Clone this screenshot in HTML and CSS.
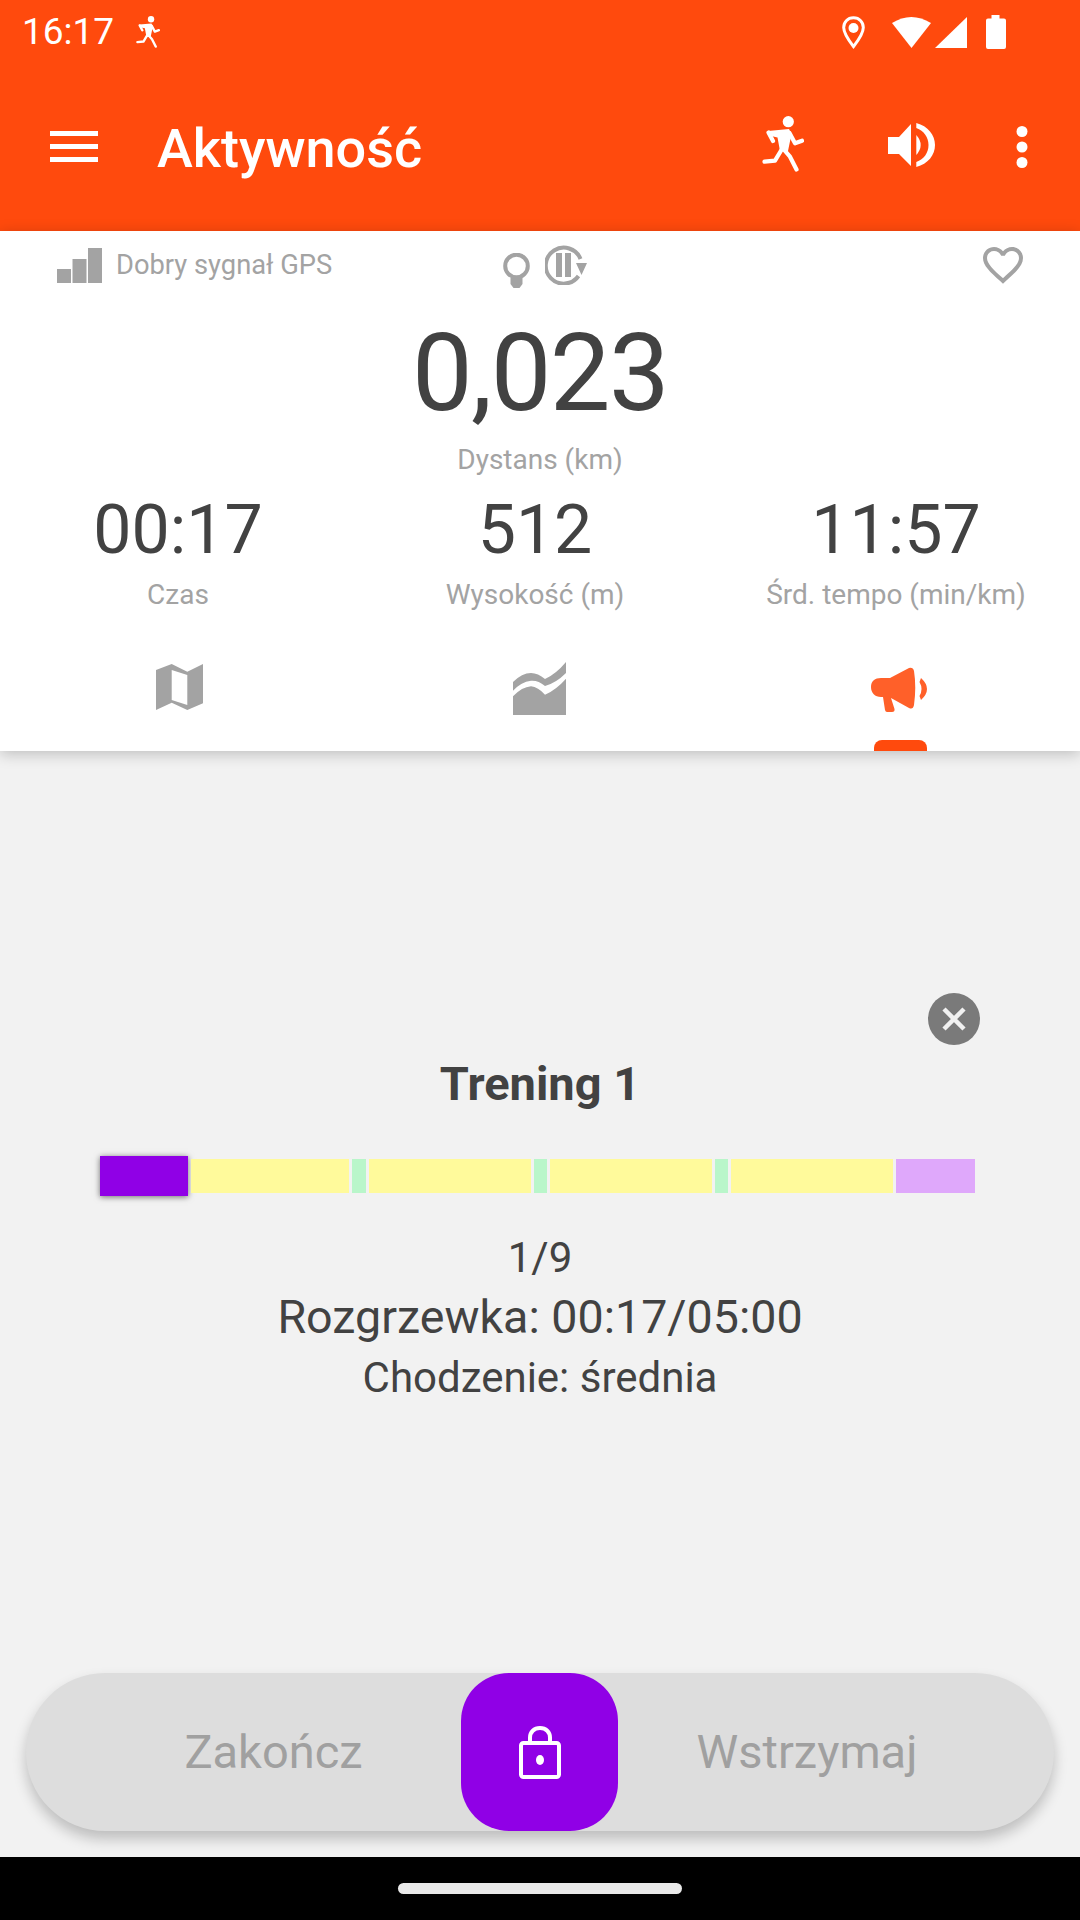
FILE: index.html
```html
<!DOCTYPE html>
<html lang="pl">
<head>
<meta charset="utf-8">
<title>Aktywność</title>
<link rel="stylesheet" href="styles.css">
</head>
<body>
<svg class="defs" width="0" height="0" aria-hidden="true">
  <symbol id="runner" viewBox="0 0 42 56">
    <circle cx="26.3" cy="5.7" r="5.6" fill="currentColor"/>
    <path d="M6 15L27 13L29.500 18L26 35L18 35L15.500 21.500L9 20Z" fill="currentColor"/>
    <path d="M6.500 16.500L11 25M27.500 17L33 27.300L40 24.700M20 33L13 44.700L2.500 45.700M20.500 32L28 40.700L34.500 53.500" fill="none" stroke="currentColor" stroke-width="4.200" stroke-linecap="round" stroke-linejoin="round"/>
  </symbol>
</svg>
<div class="phone">
  <header class="top">
    <div class="status">
      <span class="clock">16:17</span>
      <svg class="st-run"><use href="#runner"/></svg>
      <span class="spacer"></span>
      <svg class="st-pin" viewBox="0 0 23 33"><path d="M11.500 1.800C5.500 1.800 1.700 6.300 1.700 11.500C1.700 18 8 26 11.500 30.500C15 26 21.300 18 21.300 11.500C21.300 6.300 17.500 1.800 11.500 1.800Z" fill="none" stroke="#fff" stroke-width="3"/><circle cx="11.500" cy="12" r="5" fill="#fff"/></svg>
      <svg class="st-wifi" viewBox="0 0 39 32"><path d="M0 7Q19.300 -5 39 7L19.500 32Z" fill="#fff"/></svg>
      <svg class="st-signal" viewBox="0 0 32 32"><path d="M0 32L32 1V32Z" fill="#fff"/></svg>
      <svg class="st-batt" viewBox="0 0 20 34"><path d="M5.500 0H13.500V3.500H18A2 2 0 0 1 20 5.500V32A2 2 0 0 1 18 34H2A2 2 0 0 1 0 32V5.500A2 2 0 0 1 2 3.500H5.500Z" fill="#fff"/></svg>
    </div>
    <div class="appbar">
      <svg class="menu" viewBox="0 0 48 31"><path d="M0 0H48V5H0ZM0 13H48V18H0ZM0 26H48V31H0Z" fill="#fff"/></svg>
      <h1 class="title">Aktywność</h1>
      <span class="spacer"></span>
      <svg class="bar-run"><use href="#runner"/></svg>
      <svg class="speaker" viewBox="0 0 47 46"><path d="M0 15H11L23 2V44L11 32H0Z" fill="#fff"/><path d="M28.300 13Q37 23 28.300 33Z" fill="#fff"/><path d="M28.300 1C40 4 47 13 47 23C47 33 40 42 28.300 45V40C36 37 40.500 31 40.500 23C40.500 15 36 9 28.300 6Z" fill="#fff"/></svg>
      <svg class="more" viewBox="0 0 12 42"><circle cx="6" cy="5.500" r="5.500" fill="#fff"/><circle cx="6" cy="21" r="5.500" fill="#fff"/><circle cx="6" cy="36.500" r="5.500" fill="#fff"/></svg>
    </div>
  </header>

  <section class="panel">
    <div class="gps">
      <svg class="gps-bars" viewBox="0 0 45 35"><path d="M0 21H14V35H0ZM15.500 11H29.500V35H15.500ZM31 0H45V35H31Z" fill="#a3a3a3"/></svg>
      <span class="gps-text">Dobry sygnał GPS</span>
      <svg class="bulb" viewBox="0 0 27 35"><circle cx="13.500" cy="13" r="11.300" fill="none" stroke="#a3a3a3" stroke-width="4"/><path d="M7.500 25H19.500V31L16.500 35H10.500L7.500 31Z" fill="#a3a3a3"/></svg>
      <svg class="autopause" viewBox="0 0 42 40"><path d="M33.500 31A18 18 0 1 1 35.500 14" fill="none" stroke="#a3a3a3" stroke-width="4"/><path d="M11 8H17V32H11ZM20 8H26V32H20ZM31 18H42L36.500 30Z" fill="#a3a3a3"/></svg>
      <svg class="heart" viewBox="0 0 24 24"><path d="M16.500 3c-1.740 0-3.410.81-4.500 2.090C10.910 3.810 9.240 3 7.500 3 4.420 3 2 5.420 2 8.500c0 3.780 3.400 6.860 8.550 11.540L12 21.350l1.450-1.320C18.600 15.360 22 12.280 22 8.500 22 5.420 19.580 3 16.500 3zm-4.400 15.550l-.1.100-.1-.1C7.140 14.240 4 11.390 4 8.500 4 6.500 5.500 5 7.500 5c1.540 0 3.040.99 3.570 2.360h1.870C13.460 5.990 14.960 5 16.500 5c2 0 3.500 1.500 3.500 3.500 0 2.890-3.140 5.740-7.900 10.050z" fill="#a3a3a3"/></svg>
    </div>
    <div class="big-value">0,023</div>
    <div class="label big-label">Dystans (km)</div>
    <div class="metrics">
      <div class="metric"><div class="value">00:17</div><div class="label metric-label">Czas</div></div>
      <div class="metric"><div class="value">512</div><div class="label metric-label">Wysokość (m)</div></div>
      <div class="metric"><div class="value">11:57</div><div class="label metric-label">Śrd. tempo (min/km)</div></div>
    </div>
    <nav class="tabs">
      <div class="tab">
        <svg class="t-map" viewBox="0 0 47 46"><path fill-rule="evenodd" d="M0 6L15.700 0L31.300 7.700L47 0V39.300L31.300 46L15.700 38.700L0 46ZM15.700 6V36L31.300 41V11Z" fill="#a3a3a3"/></svg>
      </div>
      <div class="tab">
        <svg class="t-chart" viewBox="0 0 53 53"><path d="M0 20Q9 11 18 11Q25 11 32 17Q43 12 53 0V11Q43 21 32 24Q25 18 18 18.700Q8 20 0 28.700Z" fill="#a3a3a3"/><path d="M0 34.300Q9 25 18 24.300Q25 25 32 32.700Q43 28 53 16.700V53H0Z" fill="#a3a3a3"/></svg>
      </div>
      <div class="tab tab-on">
        <svg class="t-mega" viewBox="0 0 58 46"><path d="M0 20C0 14 4 11 10 11H19L38 1Q42 0 43 4Q45.500 20 43 38Q42 43 38 41L20 31L23.500 42Q24 45 21 45H16Q14.500 45 14 43L12 30H10C4 30 0 26 0 20Z" fill="#ff6029"/><path d="M50 11Q62 22 50 33L48.500 29Q52.500 22 48.500 15Z" fill="#ff6029"/></svg>
        <span class="indicator"></span>
      </div>
    </nav>
  </section>

  <main class="content">
    <button class="close" type="button" aria-label="Zamknij">
      <svg viewBox="0 0 26 26"><path d="M3 3L23 23M23 3L3 23" stroke="#f1f1f1" stroke-width="4.500" fill="none"/></svg>
    </button>
    <h2 class="workout">Trening 1</h2>
    <div class="steps">
      <span class="step step-now"></span>
      <span class="step step-walk" style="width:158px"></span>
      <span class="step step-rest" style="width:14px"></span>
      <span class="step step-walk" style="width:162px"></span>
      <span class="step step-rest" style="width:13px"></span>
      <span class="step step-walk" style="width:162px"></span>
      <span class="step step-rest" style="width:13px"></span>
      <span class="step step-walk" style="width:162px"></span>
      <span class="step step-cool" style="width:79px"></span>
    </div>
    <div class="count">1/9</div>
    <div class="phase">Rozgrzewka: 00:17/05:00</div>
    <div class="intensity">Chodzenie: średnia</div>

    <div class="slider">
      <div class="side side-left">Zakończ</div>
      <div class="lock">
        <svg viewBox="0 0 42 53"><path d="M11 17V11.500C11 6 15 2 21 2C27 2 31 6 31 11.500V17" fill="none" stroke="#fff" stroke-width="4"/><rect x="2" y="17" width="38" height="34" rx="2.500" fill="none" stroke="#fff" stroke-width="4"/><ellipse cx="21" cy="34" rx="4" ry="5" fill="#fff"/></svg>
      </div>
      <div class="side side-right">Wstrzymaj</div>
    </div>
  </main>

  <footer class="navbar"><span class="handle"></span></footer>
</div>
</body>
</html>
```

FILE: styles.css
```css
* { box-sizing: border-box; }
html, body { margin: 0; padding: 0; }
body { font-family: Roboto, "Noto Sans", sans-serif; background: #f2f2f2; }
.defs { display: block; height: 0; width: 0; overflow: hidden; }
svg { display: block; flex: none; }
.spacer { flex: 1; }
.phone { width: 1080px; height: 1920px; display: flex; flex-direction: column; overflow: hidden; }

.top { height: 231px; background: #ff4a0d; color: #fff; }
.status { height: 64px; display: flex; align-items: center; padding: 0 74px 0 22px; }
.clock { font-size: 37px; line-height: 62px; width: 114px; }
.st-run { width: 24px; height: 32px; }
.st-pin { width: 23px; height: 33px; margin-right: 27px; }
.st-wifi { width: 39px; height: 32px; margin-right: 4px; }
.st-signal { width: 32px; height: 32px; margin-right: 19px; }
.st-batt { width: 20px; height: 34px; }

.appbar { height: 167px; display: flex; align-items: center; padding: 0 52px 0 50px; }
.menu { width: 48px; height: 31px; margin: -2px 59px 0 0; }
.title { margin: 2px 0 0; font-size: 54px; line-height: 60px; font-weight: 500; }
.bar-run { width: 42px; height: 56px; margin: -7px 84px 0 0; }
.speaker { width: 47px; height: 46px; margin: -5px 81px 0 0; }
.more { width: 12px; height: 42px; margin-top: -2px; }

.panel { position: relative; z-index: 1; height: 520px; background: #fff; box-shadow: 0 3px 14px rgba(0,0,0,.22); }
.gps { height: 68px; display: flex; align-items: center; padding-left: 57px; }
.gps-bars { width: 45px; height: 35px; }
.gps-text { font-size: 27.300px; line-height: 34px; color: #a3a3a3; margin-left: 14px; width: 387px; white-space: nowrap; }
.bulb { width: 27px; height: 35px; margin: 10px 15px 0 0; }
.autopause { width: 42px; height: 40px; margin-right: 392px; }
.heart { width: 48px; height: 48px; }

.big-value { font-size: 108px; line-height: 126px; letter-spacing: -1.600px; text-align: center; color: #424242; margin-top: 11px; }
.label { font-size: 28px; line-height: 34px; color: #a3a3a3; text-align: center; white-space: nowrap; }
.big-label { margin-top: 7px; }
.metric-label { margin-top: 8px; }

.metrics { display: grid; grid-template-columns: 356px 358px 364px; margin-top: 13px; }
.value { font-size: 68px; line-height: 80px; color: #424242; text-align: center; }

.tabs { display: grid; grid-template-columns: repeat(3, 1fr); margin-top: 52px; }
.tab { display: flex; flex-direction: column; align-items: center; height: 87px; }
.t-map { width: 47px; height: 46px; margin-right: 2px; }
.t-chart { width: 53px; height: 53px; margin: -2px 2px 0 0; }
.t-mega { width: 58px; height: 46px; margin-top: 3px; }
.indicator { width: 53px; height: 11px; background: #ff4a0d; border-radius: 8px 8px 0 0; margin-top: auto; }

.content { flex: 1; display: flex; flex-direction: column; align-items: center; padding-top: 242px; min-height: 0; }
.close { width: 52px; height: 52px; border: 0; padding: 13px; border-radius: 50%; background: #7a7a7a; align-self: flex-end; margin-right: 100px; }
.close svg { width: 26px; height: 26px; }
.workout { margin: 9px 0 0; font-size: 47px; line-height: 60px; font-weight: 700; color: #424242; }
.steps { width: 875px; height: 40px; margin: 42px 5px 0 0; display: flex; align-items: center; gap: 3px; }
.step { display: block; height: 34px; flex: none; }
.step-now { width: 88px; height: 40px; background: #9000e6; box-shadow: 0 1px 6px rgba(0,0,0,.55); }
.step-walk { background: #fffa9b; }
.step-rest { background: #b9f6ca; }
.step-cool { background: #dfa8fb; }
.count { font-size: 42px; line-height: 48px; color: #424242; margin-top: 38px; }
.phase { font-size: 46.600px; line-height: 56px; color: #424242; margin-top: 7px; }
.intensity { font-size: 42px; line-height: 48px; color: #424242; margin-top: 9px; }

.slider { margin-top: auto; margin-bottom: 26px; width: 1028px; height: 158px; border-radius: 79px; background: #dddddd; box-shadow: 0 8px 14px rgba(0,0,0,.22); display: grid; grid-template-columns: 435px 157px 436px; align-items: center; }
.side { font-size: 47px; line-height: 52px; color: #a0a0a0; text-align: center; }
.side-left { padding-left: 60px; }
.side-right { padding-right: 58px; }
.lock { height: 158px; border-radius: 48px; background: #9000e6; display: flex; align-items: center; justify-content: center; }
.lock svg { width: 42px; height: 53px; }

.navbar { height: 63px; background: #000; display: flex; justify-content: center; padding-top: 26px; }
.handle { width: 284px; height: 11px; border-radius: 6px; background: #e9e9e9; }
```
